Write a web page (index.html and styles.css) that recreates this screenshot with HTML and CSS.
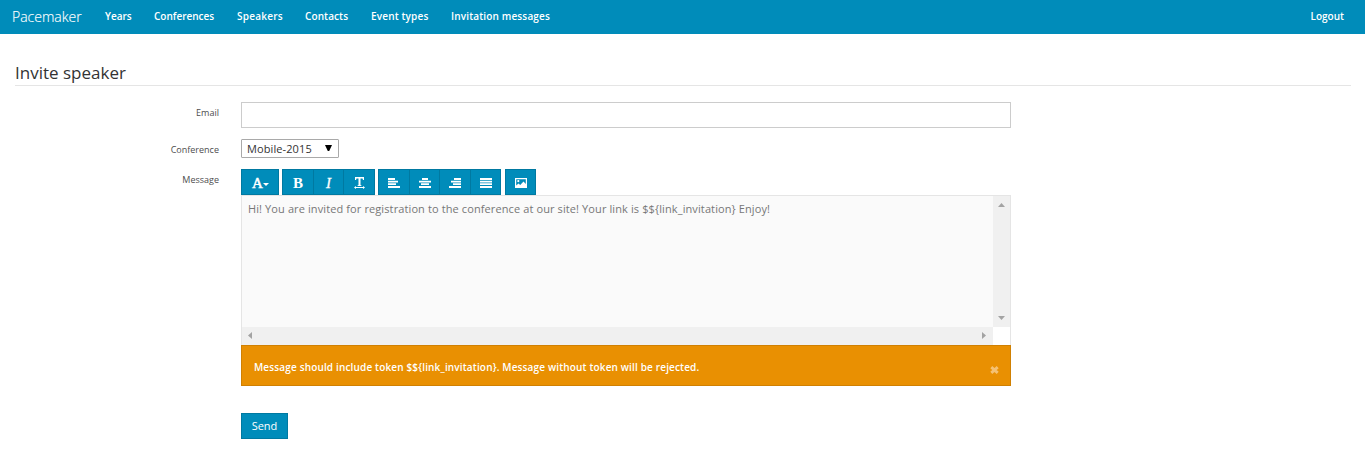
FILE: index.html
```html
<!DOCTYPE html>
<html lang="en">
<head>
<meta charset="utf-8">
<title>Invite speaker</title>
<link rel="stylesheet" href="styles.css">
</head>
<body>
<nav class="navbar">
  <a class="brand">Pacemaker</a>
  <a class="nav-link years">Years</a>
  <a class="nav-link conferences">Conferences</a>
  <a class="nav-link speakers">Speakers</a>
  <a class="nav-link contacts">Contacts</a>
  <a class="nav-link events">Event types</a>
  <a class="nav-link invitations">Invitation messages</a>
  <a class="nav-link logout">Logout</a>
</nav>
<main class="page">
  <h1 class="title"><span>Invite speaker</span></h1>
  <form class="form">
    <label class="label label-email">Email</label>
    <div class="input"></div>
    <label class="label label-conference">Conference</label>
    <div class="select"><span>Mobile-2015</span><svg width="7" height="7" viewBox="0 0 7 7"><path d="M0 0h7L4.200 6H2.800z" fill="#000"/></svg></div>
    <label class="label label-message">Message</label>
    <div class="editor">
      <div class="toolbar">
        <div class="group">
          <span class="tool tool-wide"><span class="glyph glyph-a">A</span><svg width="6" height="3" viewBox="0 0 6 3"><path d="M0 0h6L3 3z" fill="#fff"/></svg></span>
        </div>
        <div class="group">
          <span class="tool"><span class="glyph glyph-b">B</span></span>
          <span class="tool"><span class="glyph glyph-i">I</span></span>
          <span class="tool"><svg width="11" height="12" viewBox="0 0 11 12" fill="#fff"><path d="M1 0h9v3H9l-.5-1.500h-2V8l1 .5V9h-4v-.5l1-.5V1.500h-2L2 3H1z"/><path d="M0 10.500 2 9v1h7V9l2 1.500L9 12v-1H2v1z"/></svg></span>
        </div>
        <div class="group">
          <span class="tool"><svg width="12" height="10" viewBox="0 0 12 10" fill="#fff"><path d="M0 0h7v2H0zM0 2.700h10v1.800H0zM0 5.300h8v1.800H0zM0 8h12v2H0z"/></svg></span>
          <span class="tool"><svg width="12" height="10" viewBox="0 0 12 10" fill="#fff"><path d="M3 0h6v2H3zM0 2.700h12v1.800H0zM2 5.300h8v1.800H2zM0 8h12v2H0z"/></svg></span>
          <span class="tool"><svg width="12" height="10" viewBox="0 0 12 10" fill="#fff"><path d="M5 0h7v2H5zM2 2.700h10v1.800H2zM4 5.300h8v1.800H4zM0 8h12v2H0z"/></svg></span>
          <span class="tool"><svg width="12" height="10" viewBox="0 0 12 10" fill="#fff"><path d="M0 0h12v2H0zM0 2.700h12v1.800H0zM0 5.300h12v1.800H0zM0 8h12v2H0z"/></svg></span>
        </div>
        <div class="group">
          <span class="tool"><svg width="12" height="10" viewBox="0 0 12 10"><path d="M0 0h12v10H0z" fill="#fff"/><path d="M1.200 1.200h9.600v4.800L8.500 3.600 5.200 7 3.500 5.600 1.200 7.500z" fill="#008cba"/><circle cx="3.300" cy="3.100" r="1.100" fill="#fff"/></svg></span>
        </div>
      </div>
      <div class="textarea">
        <div class="text"><span>Hi! You are invited for registration to the conference at our site! Your link is $${link_invitation} Enjoy!</span></div>
        <div class="scroll scroll-y">
          <svg width="7" height="4" viewBox="0 0 7 4"><path d="M3.500 0 7 4H0z" fill="#a3a3a3"/></svg>
          <svg width="7" height="4" viewBox="0 0 7 4"><path d="M0 0h7L3.500 4z" fill="#a3a3a3"/></svg>
        </div>
        <div class="scroll scroll-x">
          <svg width="4" height="7" viewBox="0 0 4 7"><path d="M4 0v7L0 3.500z" fill="#a3a3a3"/></svg>
          <svg width="4" height="7" viewBox="0 0 4 7"><path d="M0 0v7l4-3.500z" fill="#a3a3a3"/></svg>
        </div>
      </div>
      <div class="alert"><span>Message should include token $${link_invitation}. Message without token will be rejected.</span>
        <svg class="close" width="9" height="8" viewBox="0 0 9 8"><path d="M1.300 1.100 7.700 6.900M7.700 1.100 1.300 6.900" stroke="#f5c173" stroke-width="2.900"/></svg>
      </div>
      <a class="send">Send</a>
    </div>
  </form>
</main>
</body>
</html>
```
FILE: styles.css
```css
* { box-sizing: border-box; }
body {
  margin: 0;
  background: #fff;
  color: #333;
  font-family: "Open Sans", sans-serif;
  font-size: 11px;
}
svg { display: block; flex: none; }
.navbar {
  display: flex;
  height: 34px;
  padding: 0 21px 0 12px;
  background: #008cba;
  color: #fff;
  line-height: 33px;
  white-space: nowrap;
}
.brand { width: 93px; font-size: 14px; font-weight: 300; -webkit-text-stroke: 0.15px #fff; }
.nav-link { font-size: 10px; font-weight: 600; }
.years { width: 49px; }
.conferences { width: 83px; }
.speakers { width: 68px; letter-spacing: 0.25px; }
.contacts { width: 66px; letter-spacing: 0.1px; }
.events { width: 80px; letter-spacing: 0.15px; }
.invitations { letter-spacing: 0.15px; }
.logout { margin-left: auto; }
.page { padding: 26px 14px 0 15px; }
.title {
  height: 26px;
  margin: 0 0 16px;
  border-bottom: 1px solid #e5e5e5;
  color: #333;
  font-size: 17px;
  font-weight: 400;
  line-height: 26px;
}
.form {
  display: grid;
  grid-template-columns: 204px 770px;
  grid-template-rows: 26px 19px auto;
  column-gap: 22px;
  row-gap: 11px;
}
.label { padding-top: 5px; color: #4d4d4d; font-size: 9px; line-height: 12px; text-align: right; }
.input { border: 1px solid #ccc; }
.select {
  display: flex;
  justify-content: space-between;
  width: 98px;
  padding: 0 6px 0 5px;
  border: 1px solid #a9a9a9;
  border-radius: 1px;
  letter-spacing: 0.1px;
  line-height: 18px;
  white-space: nowrap;
}
.select svg { margin-top: 5px; }
.toolbar { display: flex; gap: 3px; height: 26px; }
.group { display: flex; background: #008cba; border: 1px solid #0079a1; }
.group:last-child { margin-left: 1px; }
.tool {
  display: flex;
  align-items: center;
  justify-content: center;
  width: 30px;
  height: 24px;
}
.tool + .tool { border-left: 1px solid #0079a1; }
.tool:nth-child(3) { width: 31px; }
.tool:only-child { width: 29px; }
.tool-wide:only-child { width: 36px; padding-left: 1px; }
.tool svg { margin-top: 2px; }
.tool-wide svg { margin-top: 4px; }
.glyph { color: #fff; font-family: "Liberation Serif", serif; font-size: 15px; font-weight: 700; line-height: 24px; padding-top: 2px; }
.glyph-a { font-weight: 400; -webkit-text-stroke: 0.5px #fff; }
.glyph-i { font-style: italic; font-weight: 400; -webkit-text-stroke: 0.3px #fff; }
.textarea {
  display: grid;
  grid-template: 131px 18px / 751px 17px;
  height: 150px;
  border: 1px solid #e5e5e5;
  border-bottom-width: 0;
}
.text {
  padding: 4px 6px;
  background: #fafafa;
  color: #777;
  letter-spacing: 0.108px;
  line-height: 17px;
  white-space: nowrap;
}
.scroll { display: flex; justify-content: space-between; align-items: center; background: #f0f0f0; }
.scroll-y { flex-direction: column; padding: 7px 0; }
.scroll-x { padding: 0 7px 1px 6px; }
.alert {
  display: flex;
  justify-content: space-between;
  height: 41px;
  padding: 14px 11px 0 12px;
  background: #e99002;
  border: 1px solid #d08002;
  color: #fff;
  font-size: 10px;
  font-weight: 600;
  letter-spacing: 0.153px;
  line-height: 14px;
}
.close { margin-top: 6px; }
.send {
  display: block;
  width: 47px;
  height: 26px;
  margin-top: 27px;
  background: #008cba;
  border: 1px solid #0079a1;
  color: #fff;
  line-height: 24px;
  text-align: center;
}
```
